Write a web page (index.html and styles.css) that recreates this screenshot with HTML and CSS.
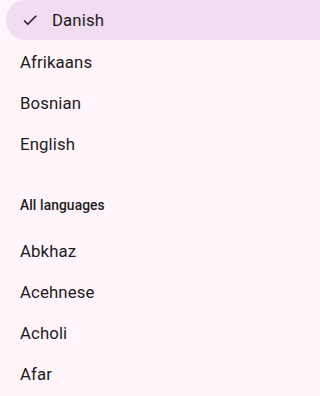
FILE: index.html
```html
<!DOCTYPE html>
<html lang="en">
<head>
<meta charset="utf-8">
<link rel="stylesheet" href="styles.css">
</head>
<body>
<div class="menu">
  <div class="item selected">
    <svg class="check" viewBox="0 0 24 24" width="18" height="18"><path d="M9 16.17L4.83 12l-1.42 1.41L9 19 21 7l-1.41-1.41z" fill="#1d1b20"/></svg>
    <span>Danish</span>
  </div>
  <div class="item"><span>Afrikaans</span></div>
  <div class="item"><span>Bosnian</span></div>
  <div class="item"><span>English</span></div>
  <div class="header">All languages</div>
  <div class="item"><span>Abkhaz</span></div>
  <div class="item"><span>Acehnese</span></div>
  <div class="item"><span>Acholi</span></div>
  <div class="item"><span>Afar</span></div>
</div>
</body>
</html>
```
FILE: styles.css
```css
html, body {
  margin: 0;
  padding: 0;
  background: #fff5fb;
}
body {
  height: 396px;
  overflow: hidden;
  font-family: Roboto, "Noto Sans", sans-serif;
  color: #1d1b20;
}
.menu {
  display: flex;
  flex-direction: column;
}
.item {
  height: 41px;
  display: flex;
  align-items: center;
  padding-left: 20px;
  font-size: 16.8px;
  letter-spacing: 0.1px;
}
.item.selected {
  height: 40px;
  margin-bottom: 1px;
  margin-left: 6px;
  padding-left: 15px;
  background: #f1dcf1;
  border-radius: 20px 0 0 20px;
  gap: 13px;
}
.check {
  display: block;
  flex: none;
}
.header {
  padding: 31px 0 15px 20px;
  font-size: 13.8px;
  font-weight: 500;
  line-height: 20px;
  letter-spacing: 0.1px;
}
```
